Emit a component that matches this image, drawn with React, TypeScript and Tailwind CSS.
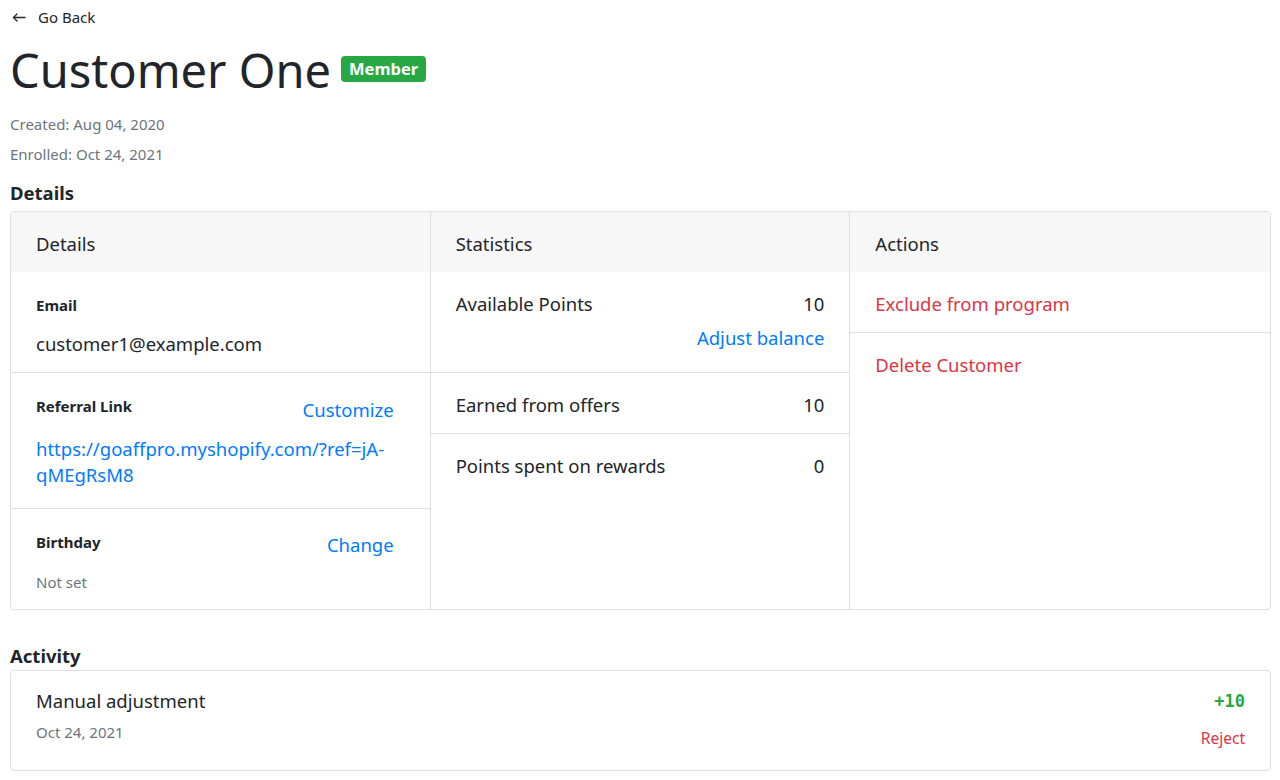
function BackArrow() {
  return (
    <svg width="14" height="12" viewBox="0 0 14 12" fill="none" stroke="currentColor" strokeWidth="1.3" strokeLinecap="round" strokeLinejoin="round" className="ml-[12px] mr-[12px]">
      <path d="M1.5 6.5h11.5" />
      <path d="M5 3L1.5 6.5 5 10" />
    </svg>
  );
}

function SectionLabel({ children }: { children: React.ReactNode }) {
  return <div className="text-[15px] font-bold leading-[24px] text-[#212529]">{children}</div>;
}

function StatRow({ label, value, last, children }: { label: string; value: string; last?: boolean; children?: React.ReactNode }) {
  return (
    <div className={`px-[25px] pb-[13px] pt-[17px] ${last ? "" : "border-b border-[#dfdfdf]"}`}>
      <div className="flex items-center justify-between leading-[30px]">
        <span>{label}</span>
        <span>{value}</span>
      </div>
      {children}
    </div>
  );
}

export default function App() {
  return (
    <div className="min-h-[780px] bg-white pl-[10px] pr-[9px] pt-[5px] font-['Noto_Sans',sans-serif] text-[#212529]">
      <a href="#" className="-ml-[10px] flex h-[24px] items-center text-[15px] text-[#212529]">
        <BackArrow />
        Go Back
      </a>

      <div className="mt-[11px] flex h-[60px] items-center gap-[10px]">
        <h1 className="text-[47px] leading-[60px] font-normal">Customer One</h1>
        <span className="mt-[-2px] rounded-[4px] bg-[#28a745] px-[8px] text-[16.5px] leading-[26px] font-bold text-white">Member</span>
      </div>

      <div className="mt-[12px] text-[15px] leading-[24px] text-[#6c757d]">Created: Aug 04, 2020</div>
      <div className="mt-[6px] text-[15px] leading-[24px] text-[#6c757d]">Enrolled: Oct 24, 2021</div>

      <h2 className="mt-[15px] text-[18.5px] leading-[24px] font-bold">Details</h2>

      <div className="mt-[6px] grid grid-cols-3 overflow-hidden rounded-[4px] border border-[#dfdfdf] text-[18.5px]">
        {/* details */}
        <div className="border-r border-[#dfdfdf]">
          <div className="bg-[#f7f7f7] px-[25px] pb-[13px] pt-[17px] leading-[30px]">Details</div>
          <div className="border-b border-[#dfdfdf] pb-[13px] pl-[25px] pr-[36px] pt-[21px]">
            <SectionLabel>Email</SectionLabel>
            <div className="mt-[12px] leading-[30px]">customer1@example.com</div>
          </div>
          <div className="border-b border-[#dfdfdf] pb-[20px] pl-[25px] pr-[36px] pt-[21px]">
            <div className="flex items-start justify-between">
              <SectionLabel>Referral Link</SectionLabel>
              <a href="#" className="mt-[1px] leading-[30px] text-[#007bff]">Customize</a>
            </div>
            <a href="#" className="mt-[11px] block break-words leading-[26px] text-[#007bff]">
              https://goaffpro.myshopify.com/?ref=jA-qMEgRsM8
            </a>
          </div>
          <div className="pb-[15px] pl-[25px] pr-[36px] pt-[21px]">
            <div className="flex items-start justify-between">
              <SectionLabel>Birthday</SectionLabel>
              <a href="#" className="leading-[30px] text-[#007bff]">Change</a>
            </div>
            <div className="mt-[10px] text-[15px] leading-[24px] text-[#6c757d]">Not set</div>
          </div>
        </div>

        {/* statistics */}
        <div className="border-r border-[#dfdfdf]">
          <div className="bg-[#f7f7f7] px-[25px] pb-[13px] pt-[17px] leading-[30px]">Statistics</div>
          <StatRow label="Available Points" value="10">
            <div className="mt-[4px] pb-[6px] text-right leading-[30px]">
              <a href="#" className="text-[#007bff]">Adjust balance</a>
            </div>
          </StatRow>
          <StatRow label="Earned from offers" value="10" />
          <StatRow label="Points spent on rewards" value="0" last />
        </div>

        {/* actions */}
        <div>
          <div className="bg-[#f7f7f7] px-[25px] pb-[13px] pt-[17px] leading-[30px]">Actions</div>
          <div className="border-b border-[#dfdfdf] px-[25px] pb-[13px] pt-[17px] leading-[30px] text-[#dc3545]">Exclude from program</div>
          <div className="px-[25px] pb-[13px] pt-[17px] leading-[30px] text-[#dc3545]">Delete Customer</div>
        </div>
      </div>

      <h2 className="mt-[34px] text-[18.5px] leading-[24px] font-bold">Activity</h2>

      <div className="mt-[2px] flex justify-between rounded-[4px] border border-[#dfdfdf] px-[25px] pb-[14px] pt-[15px]">
        <div>
          <div className="text-[18.5px] leading-[30px]">Manual adjustment</div>
          <div className="mt-[4px] text-[15px] leading-[24px] text-[#6c757d]">Oct 24, 2021</div>
        </div>
        <div className="flex flex-col items-end">
          <code className="font-['DejaVu_Sans_Mono',monospace] text-[17px] leading-[30px] font-semibold text-[#28a745]">+10</code>
          <a href="#" className="mt-[4px] py-[6px] text-[15.5px] leading-[24px] text-[#dc3545]">Reject</a>
        </div>
      </div>
    </div>
  );
}
